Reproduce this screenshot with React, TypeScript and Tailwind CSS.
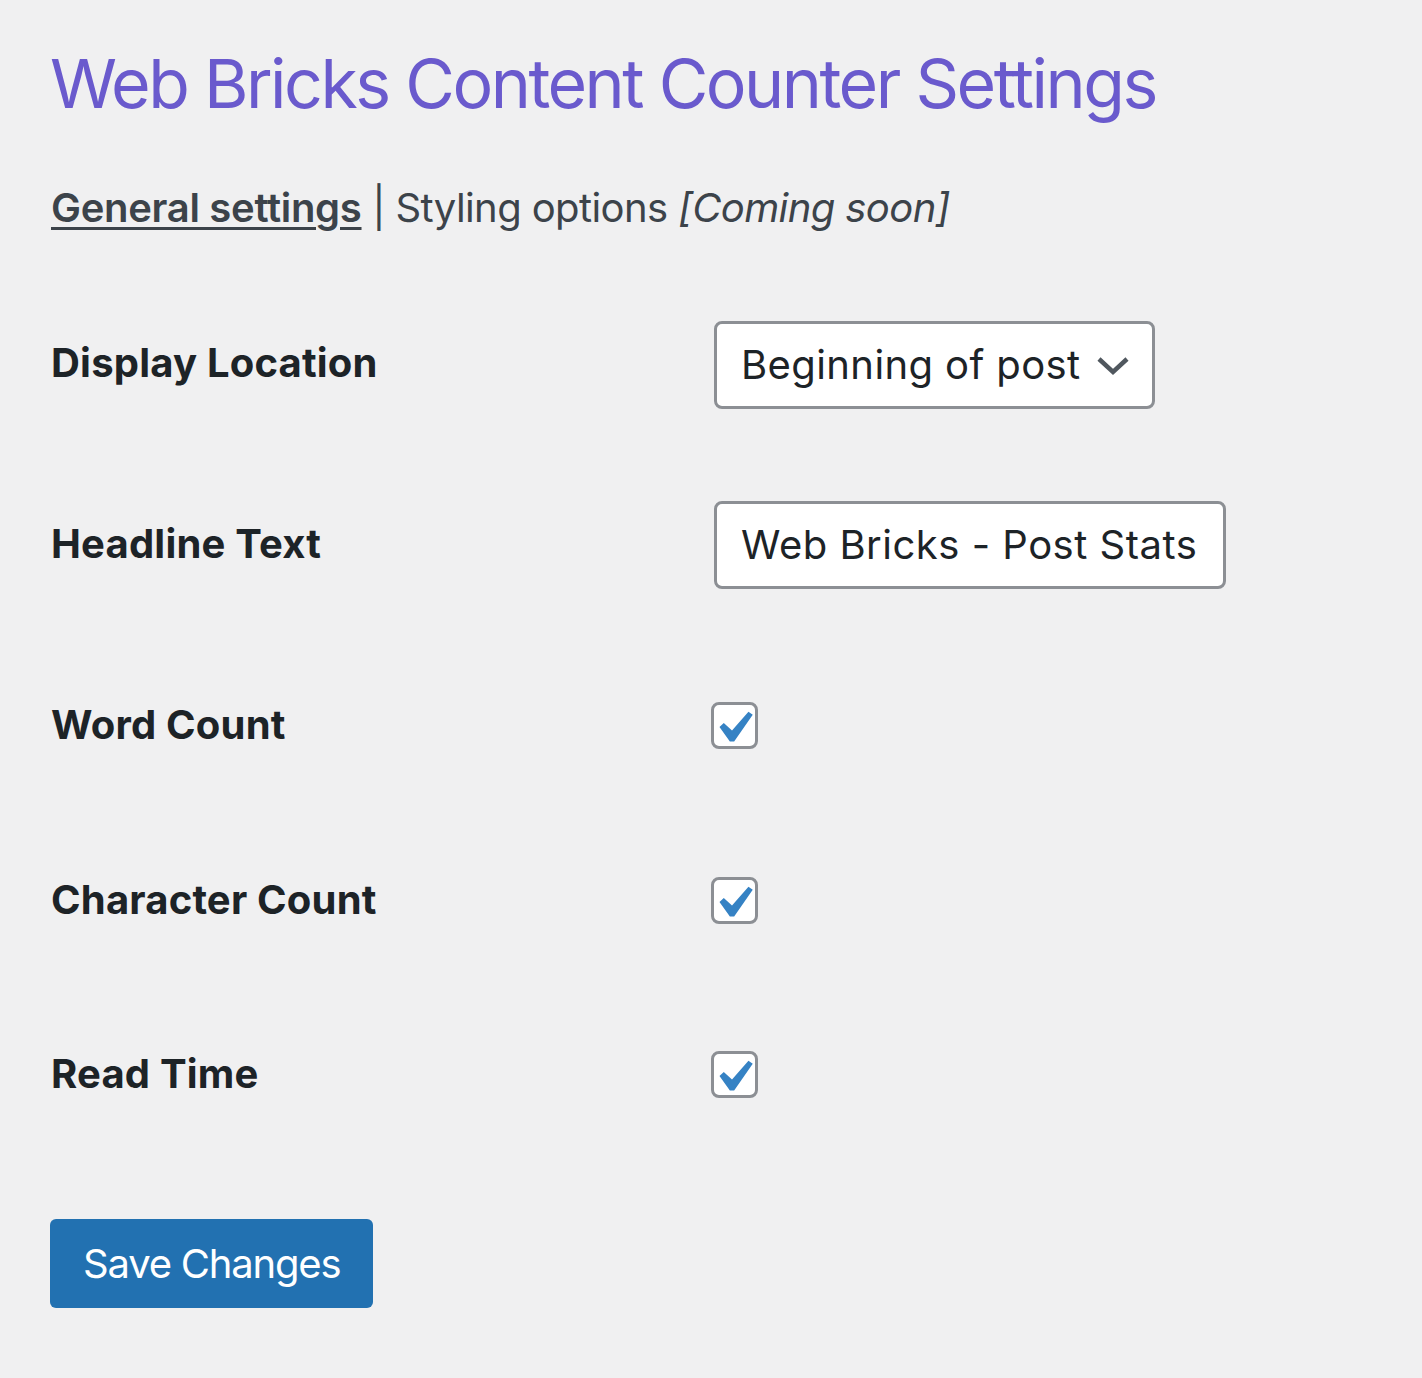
import React from "react";

const Check = () => (
  <span className="relative block h-[47px] w-[47px] shrink-0 rounded-[8px] border-[3px] border-[#8c8f94] bg-white">
    <svg
      className="absolute left-[-13px] top-[-9px] h-[64px] w-[64px]"
      viewBox="0 0 20 20"
    >
      <path
        d="M14.83 4.89l1.34.94-5.81 8.38H9.02L5.78 9.67l1.34-1.25 2.57 2.4z"
        fill="#3582c4"
      />
    </svg>
  </span>
);

export default function App() {
  return (
    <div
      className="min-h-[1378px] w-full bg-[#f0f0f1] pl-[52px] pt-[47px] text-[#1d2327]"
      style={{ fontFamily: "Inter, 'Open Sans', sans-serif" }}
    >
      <h1 className="ml-[-2px] text-[68px] leading-[72px] font-normal tracking-[-2.5px] text-[#6a5acd]">
        Web Bricks Content Counter Settings
      </h1>

      <div className="mt-[61px] ml-[-1px] text-[40px] leading-[56px] tracking-[-0.6px] text-[#3c434a]">
        <span className="font-semibold tracking-[-0.3px] underline decoration-[3px] underline-offset-[5px]">
          General settings
        </span>
        <span> | Styling options </span>
        <span className="italic">[Coming soon]</span>
      </div>

      <div className="mt-[85px] flex items-start">
        <div className="mt-[14px] ml-[-1px] w-[663px] text-[40px] leading-[56px] font-bold tracking-[0.2px]">
          Display Location
        </div>
        <div className="flex h-[88px] w-[441px] items-center justify-between rounded-[8px] border-[3px] border-[#8c8f94] bg-white pl-[24px] pr-[22px] text-[40px] tracking-[0.4px]">
          <span>Beginning of post</span>
          <svg width="34" height="22" viewBox="0 0 34 22" className="mt-[2px]">
            <path d="M3 4 L17 17 L31 4" fill="none" stroke="#50575e" strokeWidth="4.5" />
          </svg>
        </div>
      </div>

      <div className="mt-[92px] flex items-start">
        <div className="mt-[15px] ml-[-1px] w-[663px] text-[40px] leading-[56px] font-bold tracking-[0.2px]">
          Headline Text
        </div>
        <div className="flex h-[88px] w-[512px] items-center rounded-[8px] border-[3px] border-[#8c8f94] bg-white pl-[24px] text-[40px] tracking-[0.5px]">
          Web Bricks - Post Stats
        </div>
      </div>

      <div className="mt-[108px] flex items-center">
        <div className="ml-[-1px] w-[660px] text-[40px] leading-[56px] font-bold tracking-[0.2px]">Word Count</div>
        <Check />
      </div>

      <div className="mt-[119px] flex items-center">
        <div className="ml-[-1px] w-[660px] text-[40px] leading-[56px] font-bold tracking-[0.2px]">Character Count</div>
        <Check />
      </div>

      <div className="mt-[118px] flex items-center">
        <div className="ml-[-1px] w-[660px] text-[40px] leading-[56px] font-bold tracking-[0.2px]">Read Time</div>
        <Check />
      </div>

      <button className="mt-[117px] ml-[-2px] flex h-[89px] items-center rounded-[6px] bg-[#2271b1] px-[33px] text-[40px] tracking-[-1.2px] text-white">
        Save Changes
      </button>
    </div>
  );
}
